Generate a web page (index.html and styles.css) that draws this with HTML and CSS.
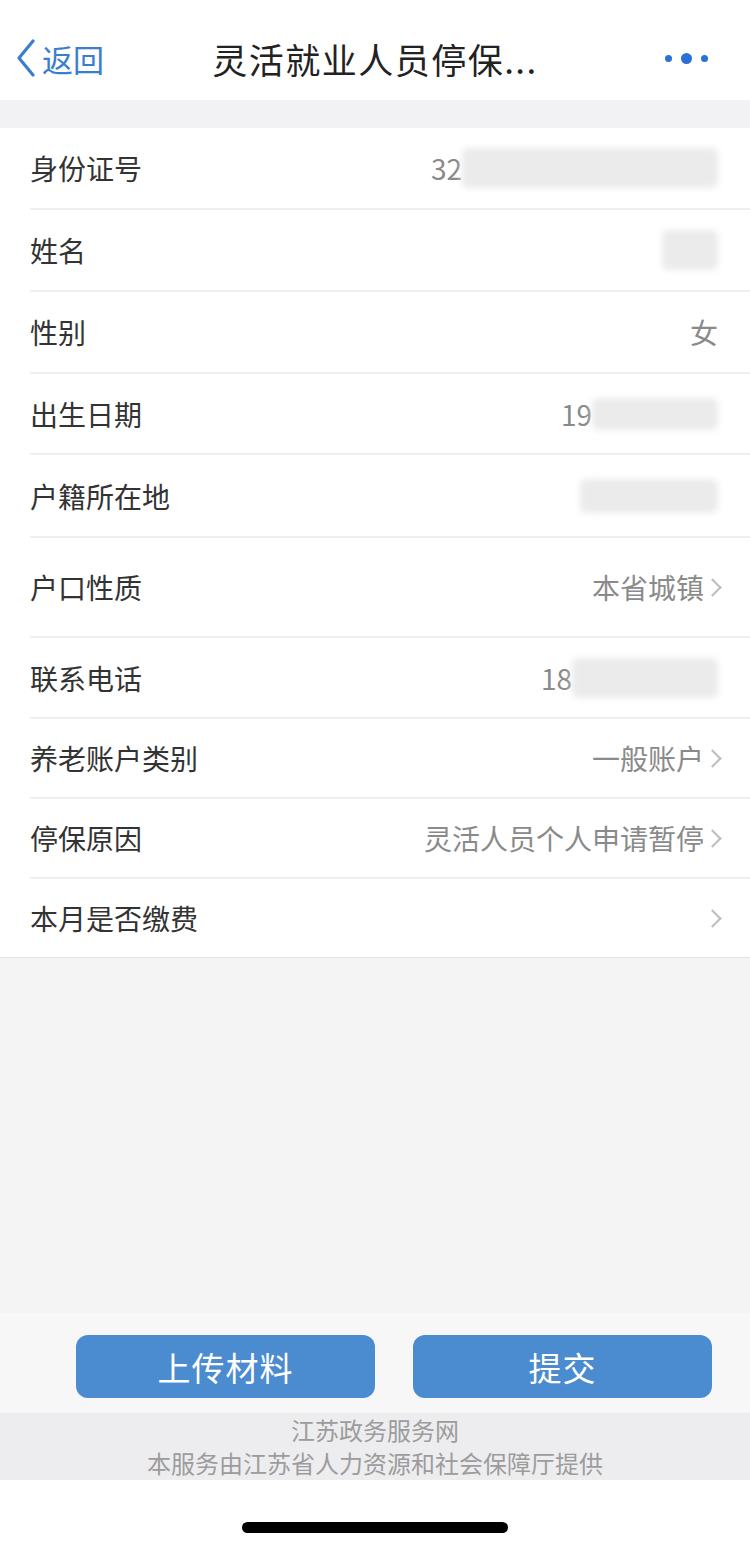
FILE: index.html
```html
<!DOCTYPE html>
<html lang="zh-CN">
<head>
    <meta charset="UTF-8">
    <meta name="viewport" content="width=device-width, initial-scale=1.0">
    <title>灵活就业人员停保</title>
    <link rel="stylesheet" href="styles.css">
</head>
<body>
    <div class="page">
        <header class="nav">
            <a class="nav-back">
                <svg class="back-arrow" viewBox="0 0 22 38" width="22" height="38">
                    <path d="M18 2 L4 19 L18 36" fill="none" stroke="#3a7ed0" stroke-width="3.2" stroke-linecap="round" stroke-linejoin="round"/>
                </svg>
                <span>返回</span>
            </a>
            <div class="nav-title">灵活就业人员停保...</div>
            <div class="nav-more">
                <i class="dot"></i><i class="dot dot-big"></i><i class="dot"></i>
            </div>
        </header>

        <div class="strip"></div>

        <ul class="form-list">
            <li class="row h82">
                <span class="label">身份证号</span>
                <span class="value">32<i class="mask mask-id"></i></span>
            </li>
            <li class="row h82">
                <span class="label">姓名</span>
                <span class="value"><i class="mask mask-name"></i></span>
            </li>
            <li class="row h82">
                <span class="label">性别</span>
                <span class="value">女</span>
            </li>
            <li class="row h81">
                <span class="label">出生日期</span>
                <span class="value">19<i class="mask mask-birth"></i></span>
            </li>
            <li class="row h83">
                <span class="label">户籍所在地</span>
                <span class="value"><i class="mask mask-addr"></i></span>
            </li>
            <li class="row h100 link">
                <span class="label">户口性质</span>
                <span class="value">本省城镇</span>
                <i class="arrow"></i>
            </li>
            <li class="row h81">
                <span class="label">联系电话</span>
                <span class="value">18<i class="mask mask-phone"></i></span>
            </li>
            <li class="row h80 link">
                <span class="label">养老账户类别</span>
                <span class="value">一般账户</span>
                <i class="arrow"></i>
            </li>
            <li class="row h80 link">
                <span class="label">停保原因</span>
                <span class="value">灵活人员个人申请暂停</span>
                <i class="arrow"></i>
            </li>
            <li class="row h78 link last">
                <span class="label">本月是否缴费</span>
                <span class="value"></span>
                <i class="arrow"></i>
            </li>
        </ul>

        <div class="spacer"></div>

        <div class="actions">
            <button type="button" class="btn">上传材料</button>
            <button type="button" class="btn">提交</button>
        </div>

        <footer class="footer">
            <p>江苏政务服务网</p>
            <p>本服务由江苏省人力资源和社会保障厅提供</p>
        </footer>

        <div class="home-bar">
            <i class="home-indicator"></i>
        </div>
    </div>
</body>
</html>
```

FILE: styles.css
```css
*{
    margin: 0;
    padding: 0;
    box-sizing: border-box;
}
body{
    background-color: #fff;
    font-family: "Noto Sans CJK SC", "Noto Sans", sans-serif;
}
.page{
    width: 750px;
    height: 1549px;
    display: flex;
    flex-direction: column;
    background-color: #f4f4f5;
}

/* 顶部导航 */
.nav{
    height: 100px;
    background-color: #fff;
    display: flex;
    align-items: center;
    padding: 16px 42px 0 15px;
}
.nav-back{
    display: flex;
    align-items: center;
    color: #3a7ed0;
    font-size: 31px;
    width: 180px;
    flex-shrink: 0;
}
.back-arrow{
    margin-right: 5px;
}
.nav-title{
    flex: 1;
    text-align: center;
    font-size: 35px;
    color: #222;
    letter-spacing: 1.5px;
    white-space: nowrap;
}
.nav-more{
    width: 153px;
    flex-shrink: 0;
    display: flex;
    justify-content: flex-end;
    align-items: center;
    gap: 9px;
}
.dot{
    width: 7px;
    height: 7px;
    border-radius: 50%;
    background-color: #2a70d6;
}
.dot-big{
    width: 11px;
    height: 11px;
}

.strip{
    height: 28px;
    background-color: #f2f2f4;
}

/* 表单列表 */
.form-list{
    list-style: none;
    background-color: #fff;
    border-bottom: 1px solid #e6e6e6;
}
.row{
    display: flex;
    align-items: center;
    margin-left: 30px;
    padding-right: 32px;
    border-bottom: 2px solid #efefef;
    font-size: 28px;
}
.row.last{
    border-bottom: none;
}
.row.link{
    padding-right: 28px;
}
.h78{ height: 78px; }
.h80{ height: 80px; }
.h81{ height: 81px; }
.h82{ height: 82px; }
.h83{ height: 83px; }
.h100{ height: 100px; }
.label{
    color: #333;
    flex-shrink: 0;
}
.value{
    flex: 1;
    text-align: right;
    color: #8a8a8a;
    display: flex;
    justify-content: flex-end;
    align-items: center;
}
.arrow{
    width: 13px;
    height: 13px;
    border-top: 2.5px solid #bdbdbd;
    border-right: 2.5px solid #bdbdbd;
    transform: rotate(45deg);
    margin-left: 2px;
    margin-right: 3px;
}

/* 打码区域 */
.mask{
    display: block;
    height: 40px;
    background-color: #ebebeb;
    border-radius: 6px;
    filter: blur(3px);
}
.mask-id{ width: 256px; }
.mask-name{ width: 56px; }
.mask-birth{ width: 126px; height: 32px; }
.mask-addr{ width: 138px; height: 34px; }
.mask-phone{ width: 146px; }

.spacer{
    flex: 1;
}

/* 底部按钮 */
.actions{
    height: 100px;
    background-color: #f7f7f8;
    display: flex;
    justify-content: center;
    gap: 38px;
    padding: 22px 0 0 38px;
}
.btn{
    width: 299px;
    height: 63px;
    border: none;
    border-radius: 12px;
    background-color: #4b8bd0;
    color: #fff;
    font-family: inherit;
    font-size: 33px;
    letter-spacing: 1px;
}

.footer{
    height: 67px;
    background-color: #ededef;
    text-align: center;
    color: #9c9c9c;
    font-size: 24px;
    line-height: 33px;
}

.home-bar{
    height: 69px;
    background-color: #fff;
    display: flex;
    justify-content: center;
    padding-top: 42px;
}
.home-indicator{
    width: 266px;
    height: 11px;
    border-radius: 6px;
    background-color: #000;
}
```
